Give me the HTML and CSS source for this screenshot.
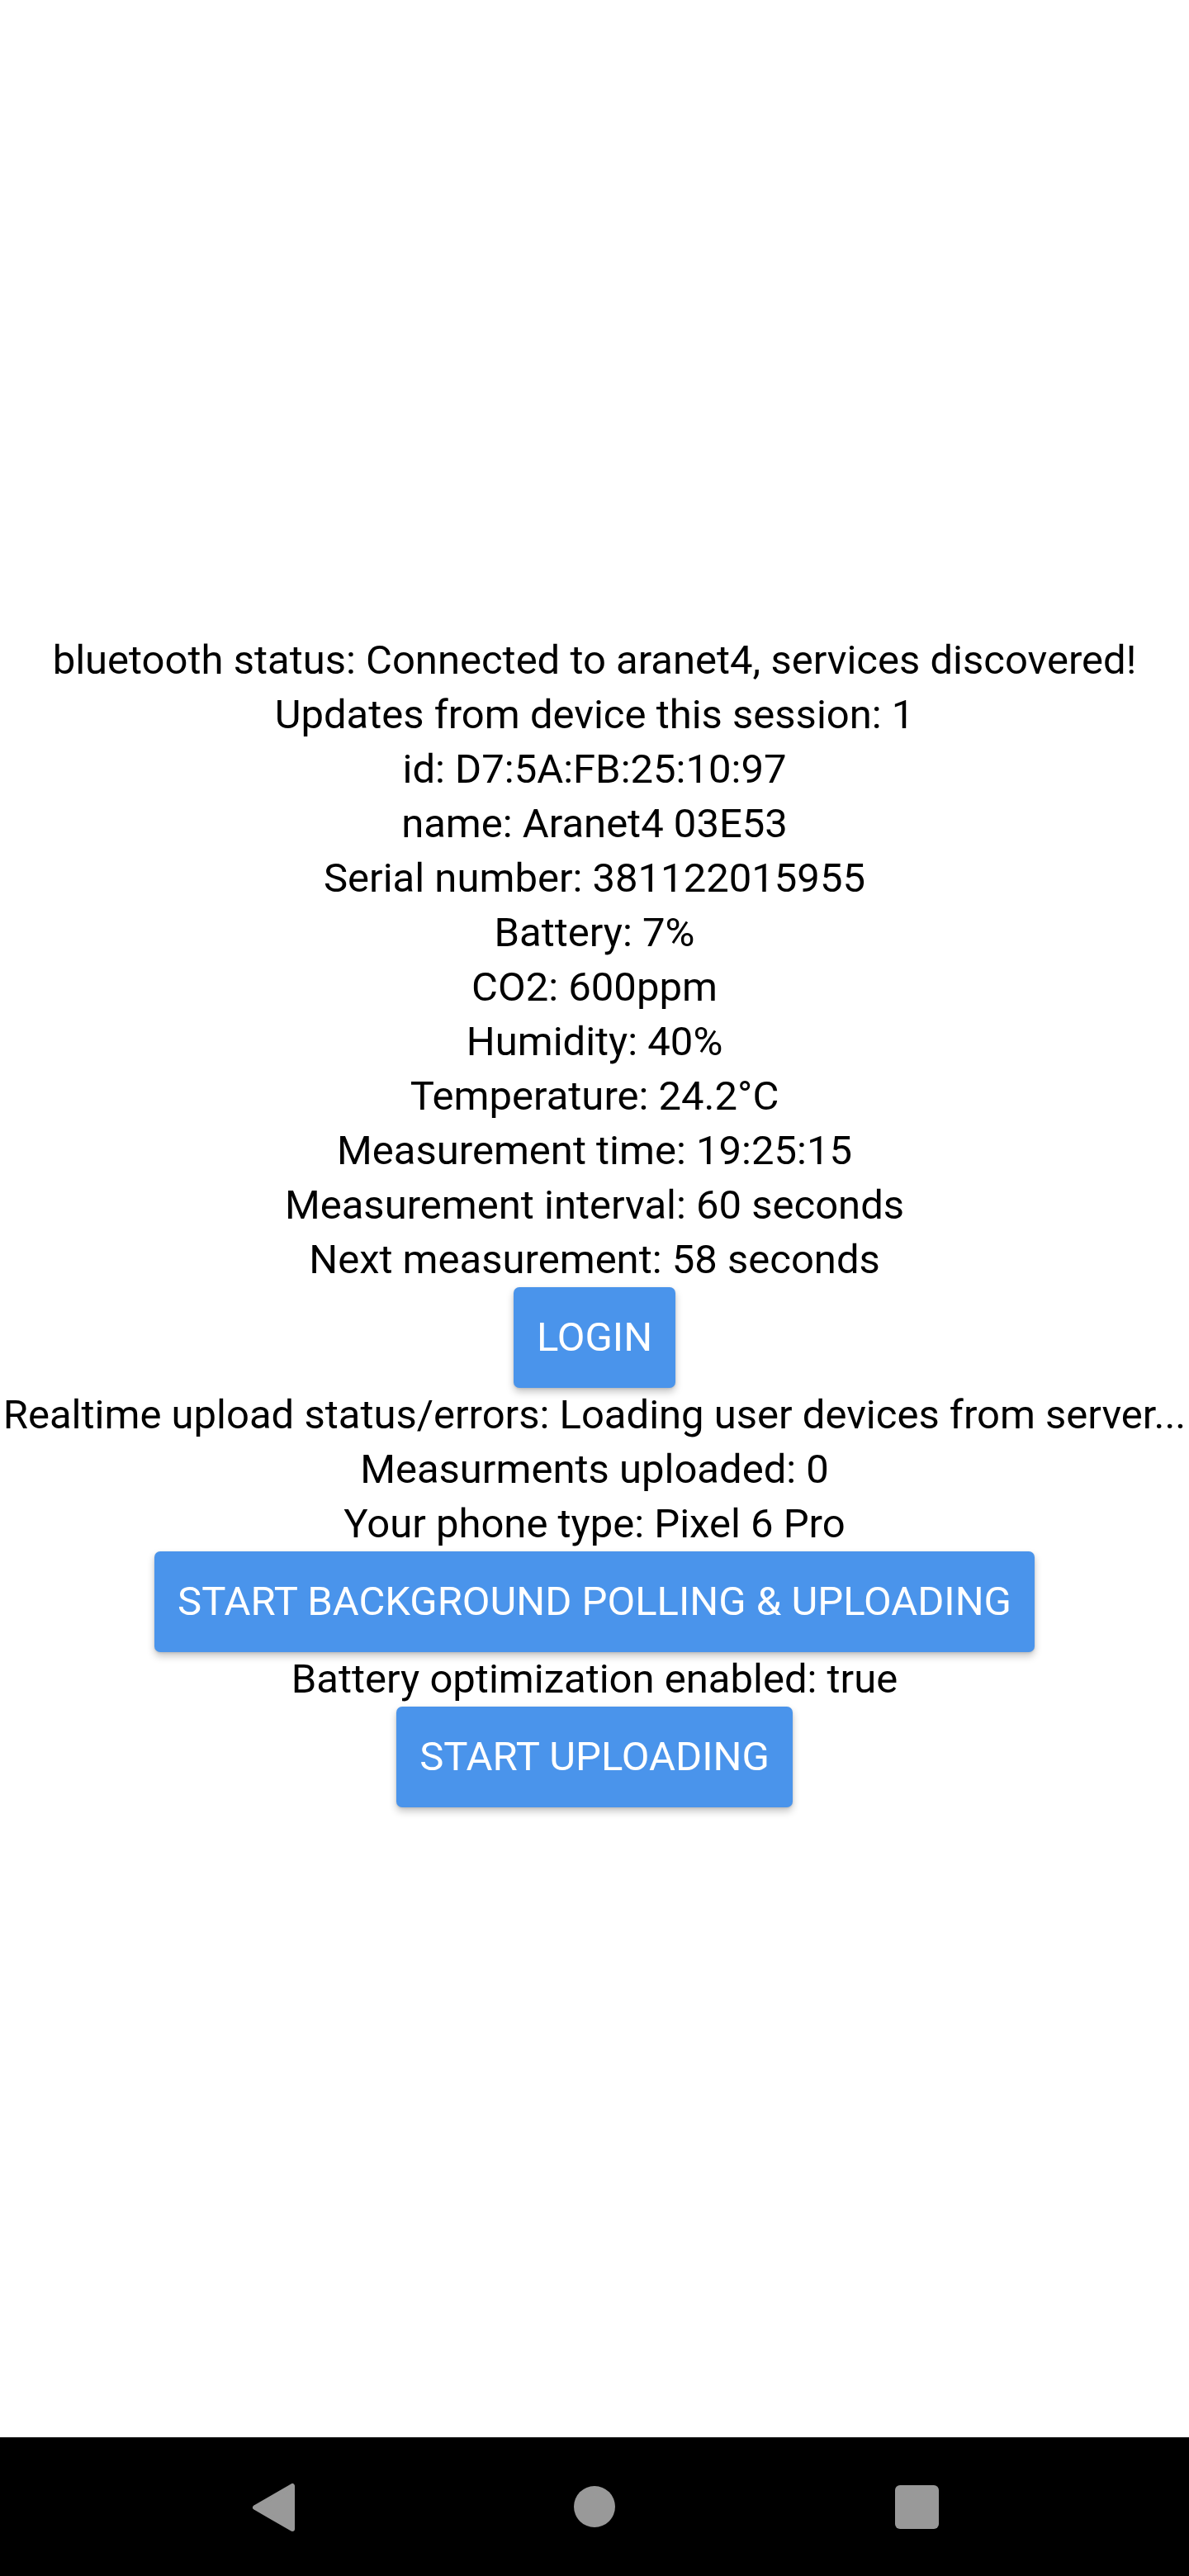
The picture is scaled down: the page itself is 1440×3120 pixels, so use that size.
FILE: index.html
```html
<!DOCTYPE html>
<html lang="en">
<head>
<meta charset="utf-8">
<title>Aranet4</title>
<link rel="stylesheet" href="styles.css">
</head>
<body>
<div class="screen">
  <main class="content">
    <div class="stack">
      <p class="line">bluetooth status: Connected to aranet4, services discovered!</p>
      <p class="line">Updates from device this session: 1</p>
      <p class="line">id: D7:5A:FB:25:10:97</p>
      <p class="line">name: Aranet4 03E53</p>
      <p class="line">Serial number: 381122015955</p>
      <p class="line">Battery: 7%</p>
      <p class="line">CO2: 600ppm</p>
      <p class="line">Humidity: 40%</p>
      <p class="line">Temperature: 24.2°C</p>
      <p class="line">Measurement time: 19:25:15</p>
      <p class="line">Measurement interval: 60 seconds</p>
      <p class="line">Next measurement: 58 seconds</p>
      <button class="btn" type="button">Login</button>
      <p class="line">Realtime upload status/errors: Loading user devices from server...</p>
      <p class="line">Measurments uploaded: 0</p>
      <p class="line">Your phone type: Pixel 6 Pro</p>
      <button class="btn" type="button">Start background polling &amp; uploading</button>
      <p class="line">Battery optimization enabled: true</p>
      <button class="btn" type="button">Start uploading</button>
    </div>
  </main>
  <nav class="navbar">
    <div class="nav-slot">
      <svg class="nav-back" width="56" height="64" viewBox="0 0 56 64"><polygon points="52,7 52,59 7,33" fill="#999999" stroke="#999999" stroke-width="6" stroke-linejoin="round"/></svg>
    </div>
    <div class="nav-slot">
      <span class="nav-home"></span>
    </div>
    <div class="nav-slot">
      <span class="nav-recent"></span>
    </div>
  </nav>
</div>
</body>
</html>
```
FILE: styles.css
```css
html, body {
  margin: 0;
  padding: 0;
  background: #ffffff;
}

.screen {
  width: 1440px;
  height: 3120px;
  display: flex;
  flex-direction: column;
  font-family: Roboto, "Liberation Sans", sans-serif;
  color: #000000;
}

.content {
  flex: 1;
  display: flex;
  align-items: center;
  justify-content: center;
  padding-top: 4px;
}

.stack {
  display: flex;
  flex-direction: column;
  align-items: center;
  width: 100%;
}

.line {
  margin: 0;
  font-size: 49px;
  line-height: 66px;
  text-align: center;
  white-space: nowrap;
}

.btn {
  display: block;
  margin: 0;
  padding: 28px 28px;
  border: none;
  border-radius: 7px;
  background: #4a94eb;
  color: #ffffff;
  font-family: Roboto, "Liberation Sans", sans-serif;
  font-size: 49px;
  font-weight: 400;
  line-height: 66px;
  text-transform: uppercase;
  box-shadow: 0 5px 10px rgba(0, 0, 0, 0.22), 0 1px 3px rgba(0, 0, 0, 0.12);
}

.navbar {
  height: 168px;
  background: #000000;
  display: grid;
  grid-template-columns: 390px 390px 390px;
  justify-content: center;
  align-items: center;
}

.nav-slot {
  display: flex;
  align-items: center;
  justify-content: center;
}

.nav-back {
  display: block;
}

.nav-home {
  display: block;
  width: 50px;
  height: 50px;
  border-radius: 50%;
  background: #999999;
}

.nav-recent {
  display: block;
  width: 53px;
  height: 53px;
  border-radius: 6px;
  background: #999999;
}
```
